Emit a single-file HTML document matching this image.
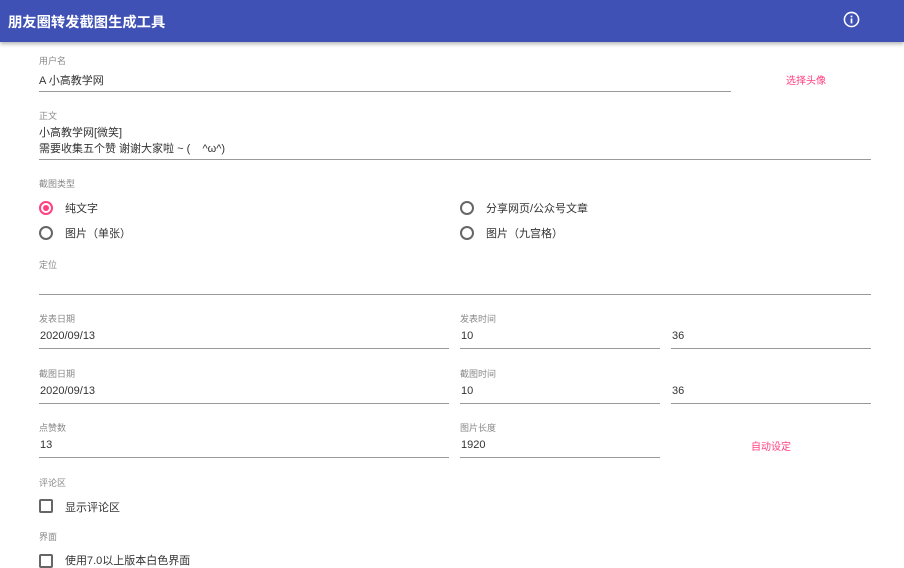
<!DOCTYPE html><html><head><meta charset="utf-8"><style>
body{margin:0;width:904px;height:558px;overflow:hidden;background:#fff;font-family:"Liberation Sans","Noto Sans CJK SC",sans-serif;position:relative;color:#333}
.hd{position:absolute;left:0;top:0;width:904px;height:42px;background:#3f51b5;box-shadow:0 2px 4px rgba(0,0,0,.3)}
.hd span{position:absolute;left:8px;top:11px;color:#fff;font-size:14.3px;font-weight:bold}
.a{position:absolute;white-space:nowrap}
.l{font-size:9px;color:#888}
.v{font-size:11px;color:#333}
.u{position:absolute;height:1px;background:#999}
.p{font-size:10px;color:#ff4081}
.r{position:absolute;width:10px;height:10px;border:2px solid #666;border-radius:50%}
.c{position:absolute;width:10px;height:10px;border:2px solid #666;border-radius:2px}
</style></head><body>
<div class="hd"><span>朋友圈转发截图生成工具</span>
<svg style="position:absolute;left:843px;top:11px" width="17" height="17" viewBox="0 0 24 24"><circle cx="12" cy="12" r="10" fill="none" stroke="#fff" stroke-width="2.2"/><rect x="10.8" y="10.5" width="2.4" height="7" fill="#fff"/><rect x="10.8" y="6.5" width="2.4" height="2.4" fill="#fff"/></svg></div>
<div class="a l" style="left:39px;top:54px">用户名</div>
<div class="a v" style="left:39px;top:72px">A 小高教学网</div>
<div class="u" style="left:39px;top:91px;width:692px"></div>
<div class="a p" style="left:786px;top:72px">选择头像</div>
<div class="a l" style="left:39px;top:109px">正文</div>
<div class="a v" style="left:39px;top:125px;line-height:16px">小高教学网[微笑]<br>需要收集五个赞 谢谢大家啦 ~ (&nbsp;&nbsp;&nbsp; ^ω^)</div>
<div class="u" style="left:39px;top:159px;width:832px"></div>
<div class="a l" style="left:39px;top:177px">截图类型</div>
<div class="r" style="left:39px;top:201px;border-color:#ff4081"></div><div class="a" style="left:43px;top:205px;width:6px;height:6px;border-radius:50%;background:#ff4081"></div>
<div class="a v" style="left:65px;top:200px">纯文字</div>
<div class="r" style="left:460px;top:201px"></div><div class="a v" style="left:486px;top:200px">分享网页/公众号文章</div>
<div class="r" style="left:39px;top:226px"></div><div class="a v" style="left:65px;top:225px">图片（单张）</div>
<div class="r" style="left:460px;top:226px"></div><div class="a v" style="left:486px;top:225px">图片（九宫格）</div>
<div class="a l" style="left:39px;top:258px">定位</div>
<div class="u" style="left:39px;top:294px;width:832px"></div>
<div class="a l" style="left:39px;top:312px">发表日期</div><div class="a v" style="left:40px;top:330px">2020/09/13</div><div class="u" style="left:39px;top:348px;width:410px"></div>
<div class="a l" style="left:460px;top:312px">发表时间</div><div class="a v" style="left:461px;top:330px">10</div><div class="u" style="left:460px;top:348px;width:200px"></div>
<div class="a v" style="left:672px;top:330px">36</div><div class="u" style="left:671px;top:348px;width:200px"></div>
<div class="a l" style="left:39px;top:367px">截图日期</div><div class="a v" style="left:40px;top:385px">2020/09/13</div><div class="u" style="left:39px;top:403px;width:410px"></div>
<div class="a l" style="left:460px;top:367px">截图时间</div><div class="a v" style="left:461px;top:385px">10</div><div class="u" style="left:460px;top:403px;width:200px"></div>
<div class="a v" style="left:672px;top:385px">36</div><div class="u" style="left:671px;top:403px;width:200px"></div>
<div class="a l" style="left:39px;top:421px">点赞数</div><div class="a v" style="left:40px;top:439px">13</div><div class="u" style="left:39px;top:457px;width:410px"></div>
<div class="a l" style="left:460px;top:421px">图片长度</div><div class="a v" style="left:461px;top:439px">1920</div><div class="u" style="left:460px;top:457px;width:200px"></div>
<div class="a p" style="left:751px;top:438px">自动设定</div>
<div class="a l" style="left:39px;top:476px">评论区</div>
<div class="c" style="left:39px;top:499px"></div><div class="a v" style="left:65px;top:499px">显示评论区</div>
<div class="a l" style="left:39px;top:530px">界面</div>
<div class="c" style="left:39px;top:554px"></div><div class="a v" style="left:65px;top:552px">使用7.0以上版本白色界面</div>
</body></html>
